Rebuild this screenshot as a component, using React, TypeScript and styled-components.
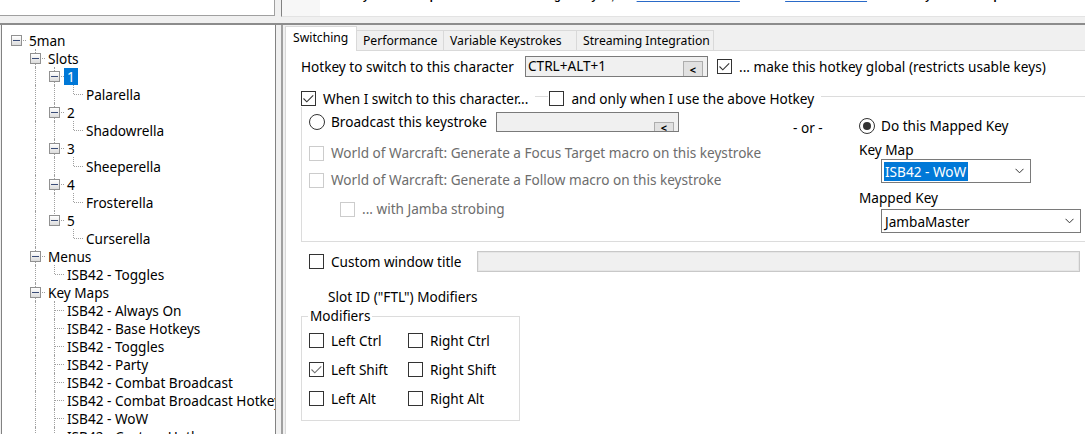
import React from 'react';
import styled, { createGlobalStyle } from 'styled-components';

const GlobalStyle = createGlobalStyle`
  html, body {
    margin: 0;
    padding: 0;
  }
  body {
    background: #f0f0f0;
    font-family: "Noto Sans", "Open Sans", sans-serif;
    font-size: 13.6px;
    color: #000;
    overflow: hidden;
  }
  * {
    box-sizing: border-box;
  }
`;

const Window = styled.div`
  display: flex;
  flex-direction: column;
  width: 1085px;
  height: 434px;
  overflow: hidden;
  background: #f0f0f0;
`;

/* ---------- top strip (clipped browser pane) ---------- */

const TopStrip = styled.div`
  display: flex;
  height: 17px;
  flex: none;
`;

const TopLeftBox = styled.div`
  width: 275px;
  height: 16px;
  background: #fff;
  border-right: 1px solid #a0a0a0;
  border-bottom: 1px solid #a0a0a0;
`;

const TopRightBox = styled.div`
  flex: 1;
  margin-left: 6px;
  display: flex;
  height: 17px;
  border-left: 1px solid #828282;
  border-bottom: 1px solid #e3e3e3;
  overflow: hidden;
`;

const TopGutter = styled.div`
  width: 38px;
  flex: none;
  background: #f7f7f7;
`;

const TopInfo = styled.div`
  flex: 1;
  background: #fff;
  padding-left: 22px;
  overflow: hidden;
  white-space: nowrap;
  font-family: "Liberation Sans", Arial, sans-serif;
  font-weight: bold;
  font-size: 11px;
  line-height: 14px;
  margin-top: -11px;
  height: 27px;
`;

const Bullet = styled.span`
  margin-right: 7px;
`;

const InfoLink = styled.span`
  color: #2a6ac8;
  text-decoration: underline;
`;

const SplitGap = styled.div`
  height: 6px;
  flex: none;
`;

/* ---------- lower area ---------- */

const Lower = styled.div`
  flex: 1;
  min-height: 0;
  display: flex;
  border-top: 2px solid #8c8c8c;
`;

const TreePanel = styled.div`
  width: 275px;
  margin-left: 1px;
  flex: none;
  background: #fff;
  border-left: 1px solid #828282;
  border-right: 1px solid #828282;
  padding: 6px 0 0 5px;
  overflow: hidden;
`;

const TreeRow = styled.div`
  display: flex;
  height: 18px;
  align-items: center;
  white-space: nowrap;
`;

const Guide = styled.div<{ $line: boolean }>`
  position: relative;
  width: 19px;
  height: 18px;
  flex: none;

  &::before {
    content: '';
    display: ${({ $line }) => ($line ? 'block' : 'none')};
    position: absolute;
    left: 9px;
    top: 0;
    bottom: 0;
    border-left: 1px dotted #a0a0a0;
  }
`;

const Joint = styled.div<{ $up: boolean; $down: boolean }>`
  position: relative;
  width: 19px;
  height: 18px;
  flex: none;

  &::before {
    content: '';
    display: ${({ $up, $down }) => ($up || $down ? 'block' : 'none')};
    position: absolute;
    left: 9px;
    top: ${({ $up }) => ($up ? '0' : '9px')};
    bottom: ${({ $down }) => ($down ? '0' : '9px')};
    border-left: 1px dotted #a0a0a0;
  }

  &::after {
    content: '';
    position: absolute;
    left: 10px;
    right: 0;
    top: 9px;
    border-top: 1px dotted #a0a0a0;
  }
`;

const Expander = styled.span`
  position: absolute;
  left: 4px;
  top: 4px;
  width: 11px;
  height: 11px;
  border: 1px solid #919191;
  background: linear-gradient(#ffffff, #dcdcdc);
  z-index: 1;

  &::after {
    content: '';
    position: absolute;
    left: 1px;
    right: 1px;
    top: 4px;
    height: 1px;
    background: #3b4d78;
  }
`;

const NodeLabel = styled.span<{ $selected?: boolean }>`
  padding: 0 3px 0 3px;
  line-height: 17px;
  background: ${({ $selected }) => ($selected ? '#0078d7' : 'transparent')};
  color: ${({ $selected }) => ($selected ? '#fff' : '#000')};
`;

const RightPanel = styled.div`
  flex: 1;
  margin-left: 5px;
  border-left: 2px solid #a0a0a0;
  padding-left: 2px;
  display: flex;
  flex-direction: column;
  min-width: 0;
`;

/* ---------- tabs ---------- */

const TabStrip = styled.div`
  display: flex;
  align-items: flex-end;
  height: 26px;
  flex: none;
  border-bottom: 1px solid #d9d9d9;
`;

const Tab = styled.div<{ $w: number; $active?: boolean }>`
  width: ${({ $w }) => $w}px;
  height: ${({ $active }) => ($active ? '25px' : '20px')};
  margin-bottom: ${({ $active }) => ($active ? '-1px' : '0')};
  margin-left: ${({ $active }) => ($active ? '0' : '-1px')};
  background: ${({ $active }) => ($active ? '#fff' : '#f0f0f0')};
  border: 1px solid #d9d9d9;
  border-bottom: none;
  display: flex;
  align-items: center;
  padding: ${({ $active }) => ($active ? '0 0 3px 7px' : '0 0 0 6px')};
  font-size: 12.2px;
  white-space: nowrap;
  position: relative;
  z-index: ${({ $active }) => ($active ? 1 : 0)};
`;

const TabPage = styled.div`
  flex: 1;
  background: #fff;
  border-left: 1px solid #d9d9d9;
  padding: 5px 0 0 15px;
  display: flex;
  flex-direction: column;
`;

/* ---------- controls ---------- */

const Row = styled.div<{ $h?: number }>`
  display: flex;
  align-items: center;
  height: ${({ $h }) => $h ?? 16}px;
  white-space: nowrap;
`;

const FieldLabel = styled.span<{ $w?: number }>`
  display: block;
  width: ${({ $w }) => ($w ? `${$w}px` : 'auto')};
  flex: none;
  line-height: 16px;
`;

const Box = styled.span<{ $disabled?: boolean }>`
  flex: none;
  width: 15px;
  height: 15px;
  border: 1px solid ${({ $disabled }) => ($disabled ? '#cccccc' : '#333333')};
  background: #fff;
  display: flex;
  align-items: center;
  justify-content: center;
`;

const CheckItem = styled.span<{ $w?: number; $disabled?: boolean }>`
  display: inline-flex;
  align-items: center;
  gap: 7px;
  width: ${({ $w }) => ($w ? `${$w}px` : 'auto')};
  flex: none;
  color: ${({ $disabled }) => ($disabled ? '#6d6d6d' : '#000')};
  line-height: 16px;
`;

const RadioCircle = styled.span<{ $checked?: boolean }>`
  flex: none;
  width: 16px;
  height: 16px;
  border-radius: 50%;
  border: 1px solid #333;
  background: #fff;
  display: flex;
  align-items: center;
  justify-content: center;

  &::after {
    content: '';
    width: 8px;
    height: 8px;
    border-radius: 50%;
    background: #333;
    display: ${({ $checked }) => ($checked ? 'block' : 'none')};
  }
`;

const RadioItem = styled.span<{ $w?: number }>`
  display: inline-flex;
  align-items: center;
  gap: 6px;
  width: ${({ $w }) => ($w ? `${$w}px` : 'auto')};
  flex: none;
  line-height: 16px;
`;

const KeyField = styled.div<{ $w: number; $h: number }>`
  width: ${({ $w }) => $w}px;
  height: ${({ $h }) => $h}px;
  flex: none;
  border: 1px solid #7a7a7a;
  background: #f0f0f0;
  display: flex;
  justify-content: space-between;
  padding: 0 4px 0 2px;
  line-height: 18px;
`;

const KeyButton = styled.span<{ $h: number }>`
  align-self: flex-end;
  width: 20px;
  height: ${({ $h }) => $h}px;
  border: 1px solid #adadad;
  border-bottom: none;
  background: #e1e1e1;
  font-size: 11px;
  font-weight: bold;
  line-height: ${({ $h }) => $h + 1}px;
  text-align: center;
  overflow: hidden;
`;

const DisabledField = styled.div<{ $w: number }>`
  width: ${({ $w }) => $w}px;
  height: 21px;
  flex: none;
  border: 1px solid #c8c8c8;
  box-shadow: inset 0 0 0 1px #e6e6e6;
  background: #f0f0f0;
`;

const Select = styled.div<{ $w: number }>`
  width: ${({ $w }) => $w}px;
  height: 24px;
  border: 1px solid #7a7a7a;
  background: #fff;
  display: flex;
  align-items: center;
  justify-content: space-between;
  padding: 0 6px 0 2px;
`;

const SelectText = styled.span<{ $highlight?: boolean }>`
  padding: 0 2px 0 1px;
  line-height: 19px;
  background: ${({ $highlight }) => ($highlight ? '#0078d7' : 'transparent')};
  color: ${({ $highlight }) => ($highlight ? '#fff' : '#000')};
`;

/* ---------- group boxes ---------- */

const SwitchGroup = styled.div`
  position: relative;
  margin-top: 19px;
  height: 146px;
  border-top: 1px solid #dcdcdc;
  border-left: 1px solid #dcdcdc;
  border-bottom: 1px solid #dcdcdc;
  display: flex;
  padding-left: 7px;
`;

const GroupHeader = styled.div`
  position: absolute;
  top: -6px;
  left: -1px;
  display: flex;
  align-items: center;
  height: 15px;
`;

const HeaderPiece = styled.div<{ $gapBefore?: number }>`
  background: #fff;
  display: flex;
  align-items: center;
  margin-left: ${({ $gapBefore }) => $gapBefore ?? 0}px;
  padding: 0 7px 0 ${({ $gapBefore }) => ($gapBefore ? 1 : 0)}px;
`;

const LeftCol = styled.div`
  width: 484px;
  flex: none;
  display: flex;
  flex-direction: column;
`;

const OrCol = styled.div`
  width: 66px;
  flex: none;
  padding-top: 23px;
  line-height: 16px;
`;

const RightCol = styled.div`
  display: flex;
  flex-direction: column;
  align-items: flex-start;
`;

const Spaced = styled.div<{ $top: number; $left?: number }>`
  display: flex;
  margin-top: ${({ $top }) => $top}px;
  margin-left: ${({ $left }) => $left ?? 0}px;
`;

const ModGroup = styled.div`
  position: relative;
  margin-top: 11px;
  width: 219px;
  height: 105px;
  border: 1px solid #dcdcdc;
  padding: 16px 0 0 7px;
  display: grid;
  grid-template-columns: 99px auto;
  grid-auto-rows: 15px;
  row-gap: 14px;
  align-content: start;
`;

const Legend = styled.span`
  position: absolute;
  top: -9px;
  left: 6px;
  padding: 0 2px;
  background: #fff;
  line-height: 16px;
`;

/* ---------- small pieces ---------- */

function Check({ checked, disabled, muted }: { checked?: boolean; disabled?: boolean; muted?: boolean }) {
  return (
    <Box $disabled={disabled}>
      {checked && (
        <svg width="13" height="13" viewBox="0 0 13 13">
          <path d="M1.5 6.5 L4.8 9.8 L11.2 3.4" fill="none" stroke={muted ? '#6f6f6f' : '#333'} strokeWidth="1.1" />
        </svg>
      )}
    </Box>
  );
}

function Chevron() {
  return (
    <svg width="9" height="6" viewBox="0 0 9 6">
      <path d="M0.5 0.8 L4.5 4.8 L8.5 0.8" fill="none" stroke="#333" strokeWidth="1" />
    </svg>
  );
}

/* ---------- tree data ---------- */

type TreeNode = { label: string; children?: TreeNode[]; selected?: boolean; more?: boolean };

const tree: TreeNode[] = [
  {
    label: '5man',
    children: [
      {
        label: 'Slots',
        children: [
          { label: '1', selected: true, children: [{ label: 'Palarella' }] },
          { label: '2', children: [{ label: 'Shadowrella' }] },
          { label: '3', children: [{ label: 'Sheeperella' }] },
          { label: '4', children: [{ label: 'Frosterella' }] },
          { label: '5', children: [{ label: 'Curserella' }] },
        ],
      },
      { label: 'Menus', children: [{ label: 'ISB42 - Toggles' }] },
      {
        label: 'Key Maps',
        more: true,
        children: [
          { label: 'ISB42 - Always On' },
          { label: 'ISB42 - Base Hotkeys' },
          { label: 'ISB42 - Toggles' },
          { label: 'ISB42 - Party' },
          { label: 'ISB42 - Combat Broadcast' },
          { label: 'ISB42 - Combat Broadcast Hotkeys' },
          { label: 'ISB42 - WoW' },
          { label: 'ISB42 - Custom Hotkeys', more: true },
        ],
      },
    ],
  },
];

type FlatRow = {
  label: string;
  guides: boolean[];
  hasNext: boolean;
  hasChildren: boolean;
  isRoot: boolean;
  selected?: boolean;
};

function flatten(nodes: TreeNode[], guides: boolean[], out: FlatRow[]) {
  nodes.forEach((n, i) => {
    const hasNext = i < nodes.length - 1 || !!n.more;
    out.push({
      label: n.label,
      guides,
      hasNext,
      hasChildren: !!n.children,
      isRoot: guides.length === 0 && i === 0,
      selected: n.selected,
    });
    if (n.children) flatten(n.children, [...guides, hasNext], out);
  });
  return out;
}

const rows = flatten(tree, [], []);

const tabs = [
  { label: 'Switching', w: 72, active: true },
  { label: 'Performance', w: 88 },
  { label: 'Variable Keystrokes', w: 134 },
  { label: 'Streaming Integration', w: 138 },
];

export default function App() {
  return (
    <>
      <GlobalStyle />
      <Window>
        <TopStrip>
          <TopLeftBox />
          <TopRightBox>
            <TopGutter />
            <TopInfo>
              <Bullet>•</Bullet>
              If you need help and the wiki isn't doing it for you, the <InfoLink>ISBoxer Chat Room</InfoLink> and the{' '}
              <InfoLink>ISBoxer forums</InfoLink> should be your next steps
            </TopInfo>
          </TopRightBox>
        </TopStrip>
        <SplitGap />
        <Lower>
          <TreePanel>
            {rows.map((r, idx) => (
              <TreeRow key={idx}>
                {r.guides.map((g, i) => (
                  <Guide key={i} $line={g} />
                ))}
                <Joint $up={!r.isRoot} $down={r.hasNext}>
                  {r.hasChildren && <Expander />}
                </Joint>
                <NodeLabel $selected={r.selected}>{r.label}</NodeLabel>
              </TreeRow>
            ))}
          </TreePanel>

          <RightPanel>
            <TabStrip>
              {tabs.map((t) => (
                <Tab key={t.label} $w={t.w} $active={t.active}>
                  {t.label}
                </Tab>
              ))}
            </TabStrip>
            <TabPage>
              <Row $h={21}>
                <FieldLabel $w={224}>Hotkey to switch to this character</FieldLabel>
                <KeyField $w={183} $h={21}>
                  <span>CTRL+ALT+1</span>
                  <KeyButton $h={15}>&lt;</KeyButton>
                </KeyField>
                <Spaced $top={0} $left={9}>
                  <CheckItem>
                    <Check checked />
                    ... make this hotkey global (restricts usable keys)
                  </CheckItem>
                </Spaced>
              </Row>

              <SwitchGroup>
                <GroupHeader>
                  <HeaderPiece>
                    <CheckItem>
                      <Check checked />
                      When I switch to this character...
                    </CheckItem>
                  </HeaderPiece>
                  <HeaderPiece $gapBefore={13}>
                    <CheckItem>
                      <Check />
                      and only when I use the above Hotkey
                    </CheckItem>
                  </HeaderPiece>
                </GroupHeader>

                <LeftCol>
                  <Spaced $top={15}>
                    <Row $h={20}>
                      <RadioItem $w={187}>
                        <RadioCircle />
                        Broadcast this keystroke
                      </RadioItem>
                      <KeyField $w={183} $h={20}>
                        <span />
                        <KeyButton $h={9}>&lt;</KeyButton>
                      </KeyField>
                    </Row>
                  </Spaced>
                  <Spaced $top={13}>
                    <Row>
                      <CheckItem $disabled>
                        <Check disabled />
                        World of Warcraft: Generate a Focus Target macro on this keystroke
                      </CheckItem>
                    </Row>
                  </Spaced>
                  <Spaced $top={11}>
                    <Row>
                      <CheckItem $disabled>
                        <Check disabled />
                        World of Warcraft: Generate a Follow macro on this keystroke
                      </CheckItem>
                    </Row>
                  </Spaced>
                  <Spaced $top={13} $left={31}>
                    <Row>
                      <CheckItem $disabled>
                        <Check disabled />
                        ... with Jamba strobing
                      </CheckItem>
                    </Row>
                  </Spaced>
                </LeftCol>

                <OrCol>- or -</OrCol>

                <RightCol>
                  <Spaced $top={21}>
                    <Row>
                      <RadioItem>
                        <RadioCircle $checked />
                        Do this Mapped Key
                      </RadioItem>
                    </Row>
                  </Spaced>
                  <Spaced $top={8}>
                    <FieldLabel>Key Map</FieldLabel>
                  </Spaced>
                  <Spaced $top={1} $left={22}>
                    <Select $w={150}>
                      <SelectText $highlight>ISB42 - WoW</SelectText>
                      <Chevron />
                    </Select>
                  </Spaced>
                  <Spaced $top={7}>
                    <FieldLabel>Mapped Key</FieldLabel>
                  </Spaced>
                  <Spaced $top={3} $left={22}>
                    <Select $w={200}>
                      <SelectText>JambaMaster</SelectText>
                      <Chevron />
                    </Select>
                  </Spaced>
                </RightCol>
              </SwitchGroup>

              <Spaced $top={9} $left={8}>
                <Row $h={21}>
                  <CheckItem $w={168}>
                    <Check />
                    Custom window title
                  </CheckItem>
                  <DisabledField $w={603} />
                </Row>
              </Spaced>

              <Spaced $top={17} $left={27}>
                <FieldLabel>Slot ID ("FTL") Modifiers</FieldLabel>
              </Spaced>

              <ModGroup>
                <Legend>Modifiers</Legend>
                <CheckItem>
                  <Check />
                  Left Ctrl
                </CheckItem>
                <CheckItem>
                  <Check />
                  Right Ctrl
                </CheckItem>
                <CheckItem>
                  <Check checked muted />
                  Left Shift
                </CheckItem>
                <CheckItem>
                  <Check />
                  Right Shift
                </CheckItem>
                <CheckItem>
                  <Check />
                  Left Alt
                </CheckItem>
                <CheckItem>
                  <Check />
                  Right Alt
                </CheckItem>
              </ModGroup>
            </TabPage>
          </RightPanel>
        </Lower>
      </Window>
    </>
  );
}
